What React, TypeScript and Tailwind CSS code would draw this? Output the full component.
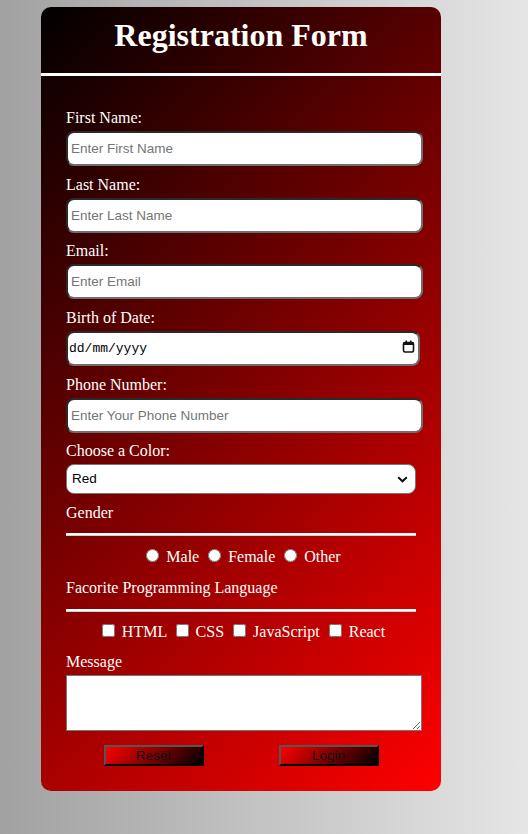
import { useState } from "react";

const serif = "font-['Liberation_Serif',serif]";
const sans = "font-['Liberation_Sans',Arial,sans-serif]";

const inputBox =
  "block w-[357px] h-[35px] mt-[4px] rounded-lg bg-white px-[3px] text-[13.5px] text-black placeholder:text-[#757575] border-2 border-t-[#2a2a2a] border-l-[#2a2a2a] border-r-[#6e6e6e] border-b-[#6e6e6e] outline-none";

const tick = "ml-[5px] mr-[3px] w-[13px] h-[13px] align-baseline";

function Field({ label, placeholder, type = "text" }: { label: string; placeholder: string; type?: string }) {
  return (
    <div className="mb-[9.7px]">
      <label className="block leading-[18px] text-[16px]">{label}</label>
      <input type={type} placeholder={placeholder} className={`${inputBox} ${sans}`} />
    </div>
  );
}

export default function App() {
  const [color, setColor] = useState("Red");

  return (
    <div className="min-h-screen bg-[linear-gradient(to_right,#a1a1a1,#e6e6e6)] pt-[7px] pl-[41px]">
      <div className={`w-[400px] rounded-[10px] overflow-hidden bg-[linear-gradient(135deg,#000000,#ff0000)] text-white ${serif}`}>
        <header className="pt-[10px] pb-[20px] border-b-[3px] border-white">
          <h1 className="text-center text-[32px] leading-[36px] font-bold">Registration Form</h1>
        </header>

        <form className="pt-[33px] pb-[25px] px-[25px]" onSubmit={(e) => e.preventDefault()}>
          <Field label="First Name:" placeholder="Enter First Name" />
          <Field label="Last Name:" placeholder="Enter Last Name" />
          <Field label="Email:" placeholder="Enter Email" type="email" />

          <div className="mb-[9.7px]">
            <label className="block leading-[18px] text-[16px]">Birth of Date:</label>
            <div className="relative mt-[4px] w-[354px] h-[35px] rounded-lg bg-white border-2 border-t-[#2a2a2a] border-l-[#2a2a2a] border-r-[#6e6e6e] border-b-[#6e6e6e]">
              <input
                type="text"
                placeholder="dd/mm/yyyy"
                className="w-full h-full bg-transparent pl-[1px] pr-[24px] text-[13px] text-black placeholder:text-black font-['Liberation_Mono',monospace] outline-none"
              />
              <svg className="absolute right-[3px] top-[7px]" width="13" height="13" viewBox="0 0 13 13">
                <rect x="1.5" y="2.5" width="10" height="9.5" rx="1.5" fill="none" stroke="#111" strokeWidth="1.6" />
                <rect x="1.5" y="2.5" width="10" height="2.5" fill="#111" />
                <rect x="3.5" y="0.5" width="1.5" height="2.5" fill="#111" />
                <rect x="8" y="0.5" width="1.5" height="2.5" fill="#111" />
              </svg>
            </div>
          </div>

          <Field label="Phone Number:" placeholder="Enter Your Phone Number" type="tel" />

          <div className="mb-[9.3px]">
            <label className="block leading-[18px] text-[16px]">Choose a Color:</label>
            <div className="relative mt-[4px] w-[350px] h-[30px]">
              <select
                value={color}
                onChange={(e) => setColor(e.target.value)}
                className={`appearance-none w-full h-full rounded-lg bg-white border border-[#767676] pl-[5px] text-[13.5px] text-black outline-none ${sans}`}
              >
                <option>Red</option>
                <option>Green</option>
                <option>Blue</option>
              </select>
              <svg className="pointer-events-none absolute right-[8px] top-[12px]" width="11" height="7" viewBox="0 0 11 7">
                <path d="M1.2 1.2 L5.5 5.3 L9.8 1.2" fill="none" stroke="#111" strokeWidth="2" />
              </svg>
            </div>
          </div>

          <div className="leading-[18px] text-[16px]">Gender</div>
          <div className="mt-[11px] w-[350px] h-[3px] bg-white border-b border-[#d0d0d0]" />
          <div className="mt-[12px] w-[350px] h-[18px] text-center leading-[18px] text-[16px]">
            <input type="radio" name="gender" className={tick} /> Male{" "}
            <input type="radio" name="gender" className={tick} /> Female{" "}
            <input type="radio" name="gender" className={tick} /> Other
          </div>

          <div className="mt-[13px] leading-[18px] text-[16px]">Facorite Programming Language</div>
          <div className="mt-[12px] w-[350px] h-[3px] bg-white border-b border-[#d0d0d0]" />
          <div className="mt-[11.7px] w-[350px] h-[18px] text-center leading-[18px] text-[16px]">
            <input type="checkbox" className={tick} /> HTML{" "}
            <input type="checkbox" className={tick} /> CSS{" "}
            <input type="checkbox" className={tick} /> JavaScript{" "}
            <input type="checkbox" className={tick} /> React
          </div>

          <label className="block mt-[12px] leading-[18px] text-[16px]">Message</label>
          <textarea className="block mt-[4px] w-[356px] h-[56px] bg-white border border-[#767676] text-black text-[13px] outline-none" />

          <div className="mt-[14px] w-[350px] flex justify-around">
            <button
              type="reset"
              className={`w-[100px] h-[21px] border-2 border-t-[#555] border-l-[#555] border-r-black border-b-black bg-[linear-gradient(135deg,#ff0000,#000000)] text-[13.5px] leading-[17px] text-[#111] ${sans}`}
            >
              Reset
            </button>
            <button
              type="submit"
              className={`w-[100px] h-[21px] border-2 border-t-[#555] border-l-[#555] border-r-black border-b-black bg-[linear-gradient(135deg,#ff0000,#000000)] text-[13.5px] leading-[17px] text-[#111] ${sans}`}
            >
              Login
            </button>
          </div>
        </form>
      </div>
    </div>
  );
}
